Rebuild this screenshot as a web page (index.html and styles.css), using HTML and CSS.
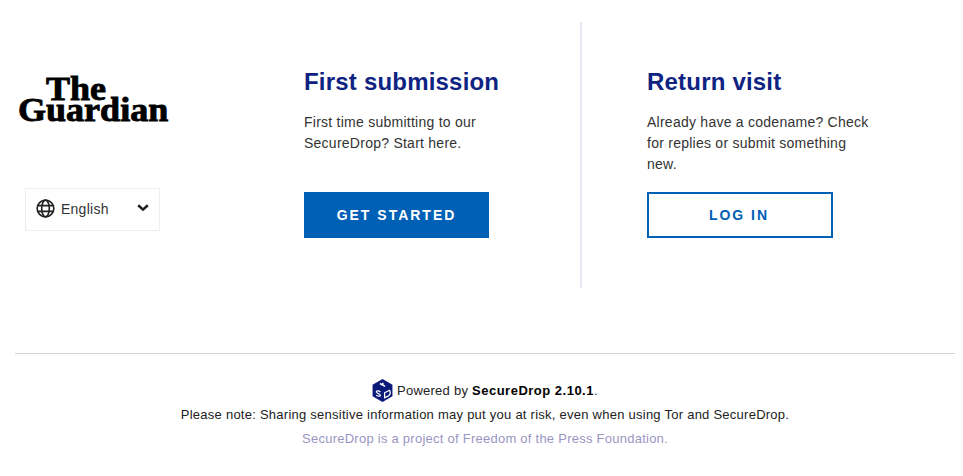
FILE: index.html
```html
<!DOCTYPE html>
<html lang="en">
<head>
  <meta charset="UTF-8">
  <meta name="viewport" content="width=device-width, initial-scale=1.0">
  <title>SecureDrop | Protecting Journalists and Sources</title>
  <link rel="stylesheet" href="styles.css">
</head>
<body>
<main class="content">
  <div class="brand">
    <div class="logo"><span class="logo-the">The</span><span class="logo-name">Guardian</span></div>
    <div class="locale">
      <svg class="globe" width="19" height="19" viewBox="0 0 20 20" fill="none" stroke="#222" stroke-width="1.7">
        <circle cx="10" cy="10" r="8.8"/>
        <ellipse cx="10" cy="10" rx="4" ry="8.8"/>
        <path d="M2 7h16M2 13h16"/>
      </svg>
      <span class="locale-name">English</span>
      <svg class="chevron" width="12" height="8" viewBox="0 0 12 8" fill="none" stroke="#222" stroke-width="2.6">
        <path d="M1.2 1.200 6 5.600l4.800-4.400"/>
      </svg>
    </div>
  </div>

  <section class="panel panel-first">
    <h2>First submission</h2>
    <p>First time submitting to our SecureDrop? Start here.</p>
    <a class="btn btn-primary" href="#">Get Started</a>
  </section>

  <section class="panel panel-return">
    <h2>Return visit</h2>
    <p>Already have a codename? Check for replies or submit something new.</p>
    <a class="btn btn-secondary" href="#">Log In</a>
  </section>
</main>

<footer class="footer">
  <p class="powered">
    <svg class="cube" width="21" height="23" viewBox="0 0 20 22">
      <path d="M10 0 19.500 5.500v11L10 22 .5 16.500v-11z" fill="#0b1a78"/>
      <path d="M7.500 4.300 12.500 7M10.300 3.500v1.800" stroke="#fff" stroke-width="1.400"/>
      <path d="M8 12.300c-2.200-1.500-4.200-1-3.900.3.300 1.100 3.500 1.500 3.800 2.900.2 1.300-2 1.300-4 .1" fill="none" stroke="#fff" stroke-width="1.200"/>
      <path d="M12 13.200 16.800 10.800c1.200 1.700.6 4.300-1 5.300L12 18z" fill="none" stroke="#fff" stroke-width="1.200"/>
    </svg>
    Powered by <strong>SecureDrop 2.10.1</strong>.
  </p>
  <p class="note">Please note: Sharing sensitive information may put you at risk, even when using Tor and SecureDrop.</p>
  <p class="project">SecureDrop is a project of Freedom of the Press Foundation.</p>
</footer>
</body>
</html>
```

FILE: styles.css
```css
body {
  font-family: "Liberation Sans", Arial, sans-serif;
  background-color: #fff;
  color: #333;
  margin: 0;
  padding: 0;
}
.content {
  display: grid;
  grid-template-columns: 304px 278px 1fr;
  height: 353px;
  padding-top: 22px;
  box-sizing: border-box;
}
.brand {
  padding-top: 56px;
}
.logo {
  display: flex;
  flex-direction: column;
  align-items: flex-start;
  width: 150px;
  height: 46px;
  margin-left: 18px;
  font-family: "Liberation Serif", "Times New Roman", serif;
  font-weight: 700;
  font-size: 34px;
  line-height: 21px;
  color: #000;
  -webkit-text-stroke: 0.9px #000;
}
.logo-the {
  margin-left: 28px;
  transform: scaleX(1.06);
  transform-origin: left;
}
.logo-name {
  transform: scaleX(1.06);
  transform-origin: left;
}
.locale {
  display: flex;
  align-items: center;
  width: 135px;
  height: 43px;
  margin: 64px 0 0 25px;
  padding: 0 10px;
  box-sizing: border-box;
  border: 1px solid #eee;
  font-size: 14px;
  letter-spacing: 0.25px;
  color: #333;
}
.globe {
  margin-bottom: 2px;
}
.locale-name {
  margin-left: 6px;
  margin-bottom: 1px;
}
.chevron {
  margin-left: auto;
  margin-bottom: 4px;
}
.panel {
  height: 266px;
  box-sizing: border-box;
  padding-top: 45px;
}
.panel-first {
  border-right: 2px solid #e8e6f5;
}
.panel-return {
  padding-left: 65px;
}
.panel h2 {
  margin: 0;
  font-size: 24px;
  line-height: 30px;
  letter-spacing: 0.2px;
  color: #0f2382;
}
.panel p {
  width: 225px;
  height: 63px;
  margin: 15px 0 17px;
  font-size: 14px;
  line-height: 21px;
  letter-spacing: 0.25px;
}
.btn {
  display: block;
  width: 185px;
  height: 46px;
  line-height: 46px;
  box-sizing: border-box;
  text-align: center;
  text-decoration: none;
  text-transform: uppercase;
  font-size: 14px;
  font-weight: 700;
  letter-spacing: 2px;
}
.btn-primary {
  background-color: #0060b6;
  color: #fff;
}
.btn-secondary {
  border: 2px solid #0060b6;
  padding-right: 2px;
  line-height: 42px;
  width: 186px;
  color: #0060b6;
}
.footer {
  margin: 0 8px 0 15px;
  padding-top: 25px;
  border-top: 1px solid #d4d4d4;
  text-align: center;
  font-size: 13px;
  line-height: 24px;
  letter-spacing: 0.25px;
  color: #222;
}
.footer p {
  margin: 0;
}
.cube {
  vertical-align: -7px;
}
.powered strong {
  color: #000;
  letter-spacing: 0.5px;
}
.project {
  color: #9a96c4;
}
```
